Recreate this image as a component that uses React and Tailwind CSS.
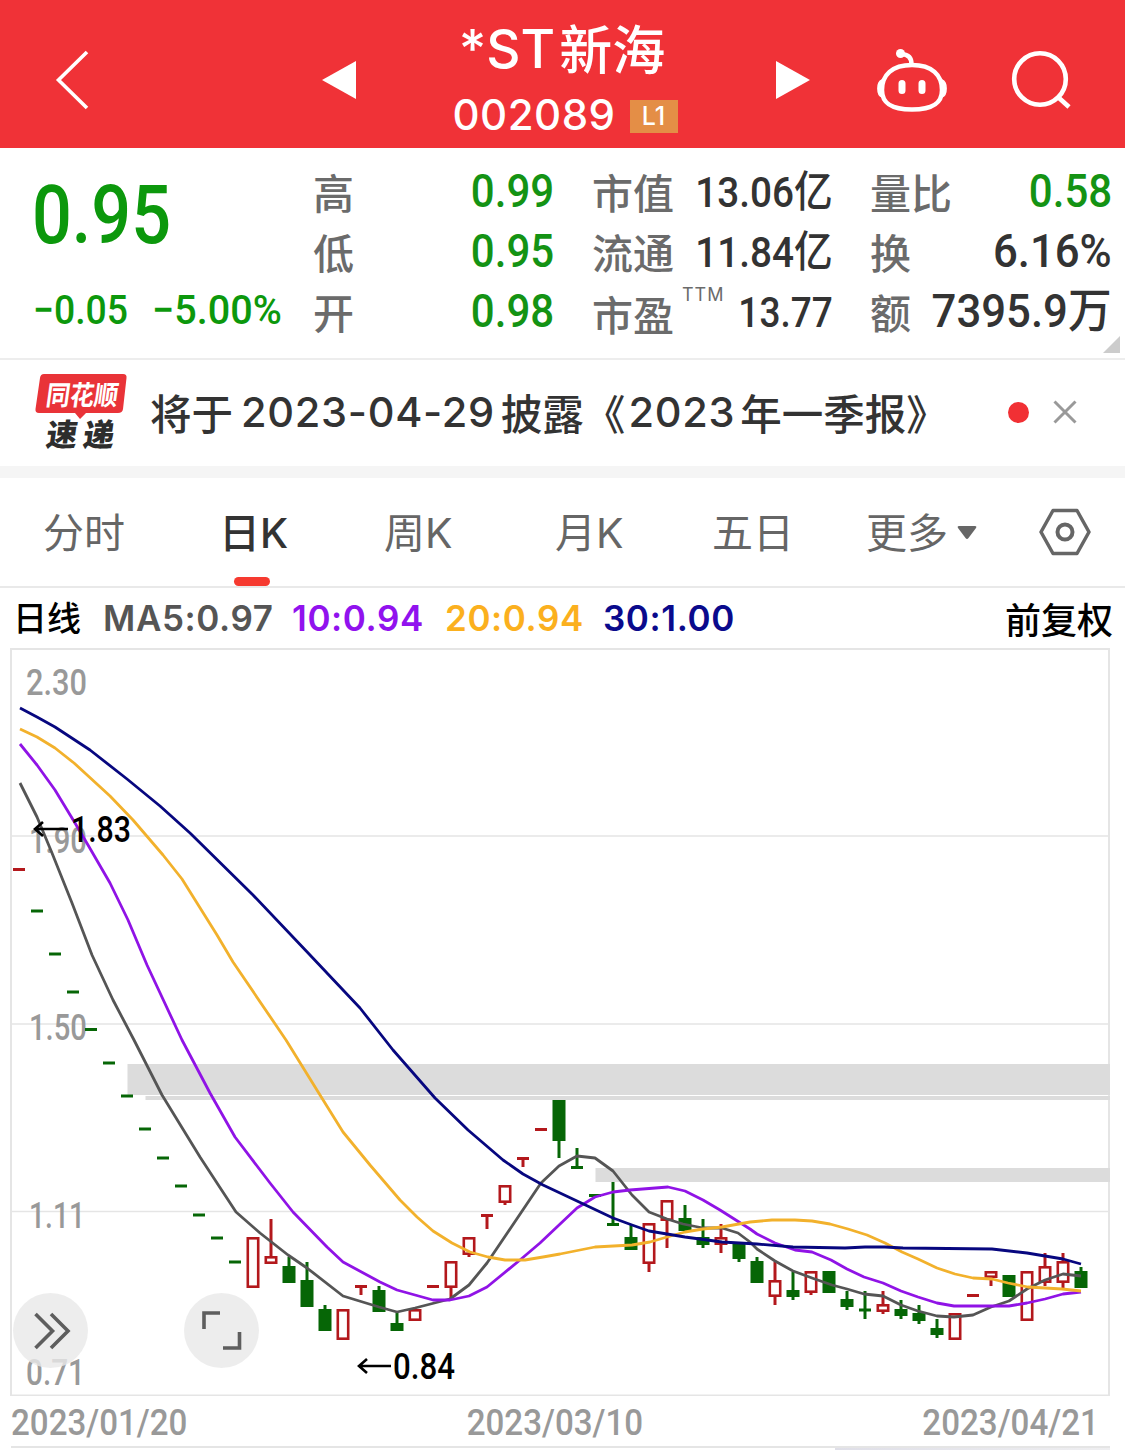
import React from 'react';

const MA_LEGEND = [
  { text: 'MA5:0.97', className: 'text-[#555555] w-[189px]' },
  { text: '10:0.94', className: 'text-[#9112ee] w-[153px]' },
  { text: '20:0.94', className: 'text-[#fbb01e] w-[158px]' },
  { text: '30:1.00', className: 'text-[#0a0a8c]' },
];

const TABS = ['分时', '日K', '周K', '月K', '五日'];

const RED = '#b3181c';
const GREEN = '#066606';
const STEP = 18;
const FIRST_X = 19;

// [type, high, top, bottom, low]; r = hollow red, g = solid green,
// dr / dg = flat day, in chart pixels
const CANDLES = [
  ['dr', 869.5, 869.5, 869.5, 869.5],
  ['dg', 911, 911, 911, 911],
  ['dg', 954, 954, 954, 954],
  ['dg', 992, 992, 992, 992],
  ['dg', 1029.5, 1029.5, 1029.5, 1029.5],
  ['dg', 1063, 1063, 1063, 1063],
  ['dg', 1096, 1096, 1096, 1096],
  ['dg', 1129, 1129, 1129, 1129],
  ['dg', 1158, 1158, 1158, 1158],
  ['dg', 1186, 1186, 1186, 1186],
  ['dg', 1215, 1215, 1215, 1215],
  ['dg', 1238, 1238, 1238, 1238],
  ['dg', 1262, 1262, 1262, 1262],
  ['r', 1237, 1237, 1288, 1288],
  ['r', 1219, 1256, 1264, 1264],
  ['g', 1257, 1266, 1283, 1283],
  ['g', 1262, 1280, 1307, 1307],
  ['g', 1305, 1309, 1331, 1331],
  ['r', 1309, 1309, 1340, 1340],
  ['dr', 1286.5, 1286.5, 1286.5, 1295],
  ['g', 1286, 1290, 1312, 1312],
  ['g', 1313, 1323, 1331, 1331],
  ['r', 1309, 1309, 1321, 1321],
  ['dr', 1286.5, 1286.5, 1286.5, 1286.5],
  ['r', 1261, 1261, 1288, 1298],
  ['r', 1237, 1237, 1255, 1257],
  ['dr', 1215.5, 1215.5, 1215.5, 1229],
  ['r', 1185, 1185, 1203, 1205],
  ['dr', 1158.5, 1158.5, 1158.5, 1167],
  ['dr', 1129.5, 1129.5, 1129.5, 1129.5],
  ['g', 1100, 1100, 1141, 1158],
  ['dg', 1148, 1167.5, 1167.5, 1168],
  ['dg', 1195.5, 1195.5, 1195.5, 1195.5],
  ['dg', 1182, 1224.5, 1224.5, 1225],
  ['g', 1225, 1237, 1250, 1250],
  ['r', 1223, 1223, 1264, 1272],
  ['r', 1200, 1200, 1221, 1248],
  ['g', 1205, 1218, 1231, 1231],
  ['g', 1219, 1237, 1245, 1248],
  ['r', 1224, 1237, 1245, 1253],
  ['g', 1243, 1243, 1259, 1262],
  ['g', 1257, 1261, 1283, 1283],
  ['r', 1262, 1280, 1297, 1305],
  ['g', 1272, 1290, 1297, 1300],
  ['r', 1271, 1271, 1293, 1295],
  ['g', 1271, 1271, 1293, 1293],
  ['g', 1291, 1299, 1307, 1310],
  ['dg', 1291, 1310, 1310, 1319],
  ['r', 1291, 1304, 1312, 1314],
  ['g', 1300, 1309, 1316, 1319],
  ['g', 1305, 1313, 1321, 1324],
  ['g', 1319, 1328, 1335, 1338],
  ['r', 1313, 1313, 1340, 1340],
  ['dr', 1295.5, 1295.5, 1295.5, 1295.5],
  ['r', 1271, 1271, 1278, 1286],
  ['g', 1275, 1275, 1297, 1297],
  ['r', 1271, 1271, 1321, 1321],
  ['r', 1253, 1266, 1283, 1286],
  ['r', 1253, 1261, 1283, 1290],
  ['g', 1267, 1271, 1288, 1288],
];

const MA_LINES = [
  {
    color: '#555555',
    points: '20,783 37,817 52,853 72,903 92,955 113,1000 134,1040 162,1095 200,1157 217,1183 236,1212 260,1233 288,1255 307,1268 343,1296 379,1307 397,1312 415,1308 450,1299 469,1285 487,1263 541,1183 559,1166 577,1156 595,1158 613,1171 632,1195 649,1212 667,1219 683,1224 703,1228 722,1228 738,1233 750,1242 757,1249 775,1261 793,1271 812,1278 832,1285 847,1289 864,1294 883,1296 901,1305 918,1311 937,1316 954,1317 973,1315 991,1307 1009,1301 1027,1289 1045,1280 1063,1274 1081,1276',
  },
  {
    color: '#9013e6',
    points: '20,744 37,765 55,790 75,823 88,845 110,883 128,920 147,965 182,1040 210,1093 235,1137 270,1183 293,1212 327,1247 343,1262 380,1282 397,1290 433,1300 450,1300 469,1296 487,1287 520,1260 540,1243 577,1208 595,1197 613,1192 630,1190 668,1187 685,1191 703,1200 720,1210 750,1229 757,1234 775,1243 795,1250 812,1252 831,1260 847,1269 864,1277 883,1283 901,1291 918,1297 937,1303 954,1306 1009,1306 1027,1303 1045,1299 1063,1294 1081,1292',
  },
  {
    color: '#f2b12c',
    points: '20,729 37,737 55,748 74,763 110,796 133,820 163,855 182,879 217,935 233,962 286,1040 320,1095 343,1132 370,1165 400,1200 417,1217 433,1231 452,1243 470,1252 488,1257 505,1260 525,1260 543,1257 560,1254 595,1247 632,1245 650,1242 667,1237 685,1232 703,1229 722,1227 750,1222 772,1220 795,1220 812,1221 830,1224 848,1229 867,1235 885,1243 902,1252 918,1259 937,1268 955,1274 973,1278 992,1279 1008,1283 1028,1287 1045,1288 1062,1289 1081,1291',
  },
  {
    color: '#07077f',
    points: '20,708 37,717 55,727 90,750 127,779 160,806 190,833 253,895 310,955 360,1008 393,1050 435,1098 468,1130 503,1160 523,1174 543,1185 577,1201 613,1218 632,1225 649,1231 685,1237 722,1242 757,1244 793,1247 845,1248 865,1247 885,1247 903,1248 992,1249 1027,1253 1045,1256 1063,1259 1081,1264',
  },
];

// Condensed DIN-like figures
const Num = ({ className, children }) => (
  <span className={`inline-block whitespace-nowrap font-['Roboto','Noto_Sans_CJK_SC',sans-serif] font-medium ${className}`}>
    {children}
  </span>
);

const Stat = ({ label, children }) => (
  <div className="flex h-[60px] items-center justify-between leading-[60px]">
    <span className="-mt-[2px] whitespace-nowrap text-[41px] font-medium text-[#6b6b6b]">{label}</span>
    {children}
  </div>
);

const Header = () => (
  <header className="flex h-[148px] items-center bg-[#f03237] pl-[52px] text-white">
    <svg className="mt-3 h-[64px] w-[40px] shrink-0" viewBox="0 0 40 64" fill="none" stroke="currentColor" strokeWidth="3.6">
      <path d="M35 4 L6.500 32 L35 60" />
    </svg>
    <svg className="ml-[230px] mt-3 h-[38px] w-[34px] shrink-0" viewBox="0 0 34 38" fill="currentColor">
      <path d="M34 0 V38 L0 19 Z" />
    </svg>
    <div className="flex w-[420px] flex-col items-center self-start pt-[15px]">
      <div className="flex h-[68px] items-center gap-[4px] pr-[8px] text-[53px] font-medium leading-[68px]">
        <span className="font-['Inter',sans-serif] text-[53px]">*ST</span>
        <span className="-mt-[4px]">新海</span>
      </div>
      <div className="mt-[2px] flex h-[60px] items-center gap-[14px] pr-[2px]">
        <span className="font-['Inter',sans-serif] text-[42px] font-medium leading-[52px] tracking-[0.5px]">002089</span>
        <span className="mt-[2px] h-[33px] w-[48px] bg-[#e48e46] text-center font-['Inter',sans-serif] text-[25px] font-medium leading-[33px]">L1</span>
      </div>
    </div>
    <svg className="mt-3 h-[38px] w-[34px] shrink-0" viewBox="0 0 34 38" fill="currentColor">
      <path d="M0 0 V38 L34 19 Z" />
    </svg>
    <svg className="ml-[66px] mt-3 h-[66px] w-[72px] shrink-0" viewBox="876 47 72 66" fill="none" stroke="currentColor" strokeWidth="4.500" strokeLinecap="round">
      <path d="M912 65 C892 65 882 75 882 90 C882 104 892 109.500 912 109.500 C932 109.500 942 104 942 90 C942 75 932 65 912 65 Z" />
      <path d="M911.500 64 C911.500 57.500 908 54.500 902 54" />
      <circle cx="900.500" cy="53.500" r="4.500" fill="currentColor" stroke="none" />
      <path d="M882 80 C876.500 82 876.500 95 882 97 Z M942 80 C947.500 82 947.500 95 942 97 Z" fill="currentColor" strokeWidth="1.500" />
      <path d="M902 83.500 V90.500 M922 83.500 V90.500" strokeWidth="7" />
    </svg>
    <svg className="ml-[62px] mt-3 h-[62px] w-[64px] shrink-0" viewBox="1010 49 64 62" fill="none" stroke="currentColor" strokeWidth="4.600">
      <circle cx="1040" cy="79" r="25.800" />
      <path d="M1058.500 97.500 L1069 107" />
    </svg>
  </header>
);

const Quote = () => (
  <section className="relative h-[212px] border-b-2 border-[#ededed] pt-[14px] font-['Noto_Sans_CJK_SC',sans-serif]">
    <div className="grid grid-cols-[280px_241px_38px_241px_37px_242px] pl-[33px]">
      <div className="flex flex-col text-[#0c980c]">
        <Num className="-ml-px h-[116px] origin-left scale-x-[0.855] text-[82px] leading-[106px]">0.95</Num>
        <div className="flex h-[64px] items-center whitespace-nowrap">
          <Num className="w-[119px] origin-left scale-x-[0.91] text-[41px] leading-[64px]">−0.05</Num>
          <Num className="origin-left scale-x-[0.965] text-[41px] leading-[64px]">−5.00%</Num>
        </div>
      </div>
      <div>
        <Stat label="高"><Num className="-mt-[2px] origin-right scale-x-[0.895] text-[47px] text-[#149314]">0.99</Num></Stat>
        <Stat label="低"><Num className="-mt-[2px] origin-right scale-x-[0.895] text-[47px] text-[#149314]">0.95</Num></Stat>
        <Stat label="开"><Num className="-mt-[2px] origin-right scale-x-[0.895] text-[47px] text-[#149314]">0.98</Num></Stat>
      </div>
      <div />
      <div>
        <Stat label="市值"><Num className="origin-right scale-x-[0.9] text-[43px] text-[#333333]">13.06亿</Num></Stat>
        <Stat label="流通"><Num className="origin-right scale-x-[0.9] text-[43px] text-[#333333]">11.84亿</Num></Stat>
        <div className="flex h-[60px] items-center justify-between leading-[60px]">
          <span className="mt-px whitespace-nowrap text-[41px] font-medium text-[#6b6b6b]">市盈</span>
          <span className="-mr-4 mb-[35px] ml-2 font-['Inter',sans-serif] text-[18px] leading-none tracking-[1px] text-[#6b6b6b]">TTM</span>
          <Num className="ml-auto origin-right scale-x-[0.86] text-[43px] text-[#333333]">13.77</Num>
        </div>
      </div>
      <div />
      <div>
        <Stat label="量比"><Num className="-mt-[2px] origin-right scale-x-[0.895] text-[47px] text-[#149314]">0.58</Num></Stat>
        <Stat label="换"><Num className="-mt-[2px] origin-right scale-x-[0.93] text-[47px] text-[#333333]">6.16%</Num></Stat>
        <Stat label="额"><Num className="-mt-[2px] origin-right scale-x-[0.93] text-[47px] text-[#333333]">7395.9万</Num></Stat>
      </div>
    </div>
    <svg className="absolute bottom-[5px] right-[5px] h-[17px] w-[17px]" viewBox="0 0 17 17">
      <path d="M17 0 V17 H0 Z" fill="#cccccc" />
    </svg>
  </section>
);

const NewsBar = () => (
  <section className="flex h-[118px] items-center border-b-[12px] border-[#f5f5f5] pl-[34px] font-['Noto_Sans_CJK_SC',sans-serif]">
    <svg className="h-[82px] w-[94px] shrink-0" viewBox="34 372 94 82">
      <path d="M44 374 H123 Q127 374 126.500 378 L123 409 Q122.500 413 118 413 H86 L80 419 L75 413 H39 Q35 413 35.500 409 L40 378 Q40.500 374 44 374 Z" fill="#e93338" />
      <text x="0" y="0" transform="translate(45 404.500) skewX(-8)" textLength="72" lengthAdjust="spacingAndGlyphs" className="text-[27px] font-bold" fill="#ffffff">同花顺</text>
      <text x="0" y="0" transform="translate(45 446) skewX(-8)" textLength="68" lengthAdjust="spacing" className="text-[31px] font-black" fill="#2d2d2d">速递</text>
    </svg>
    <div className="-mt-[3px] ml-[22px] flex w-[858px] items-center whitespace-nowrap text-[41.500px] font-medium leading-[60px] text-[#333333]">
      <span>将于</span>
      <span className="ml-2 mr-[6px] mt-px font-['Inter',sans-serif] tracking-[0.7px]">2023-04-29</span>
      <span>披露《</span>
      <span className="ml-[3px] mr-[5px] mt-px font-['Inter',sans-serif] tracking-[0.7px]">2023</span>
      <span>年一季报》</span>
    </div>
    <span className="-mt-[2px] h-[21px] w-[21px] rounded-full bg-[#f13034]" />
    <svg className="-mt-[2px] ml-[24px] h-[24px] w-[24px]" viewBox="0 0 24 24" stroke="#999999" strokeWidth="3">
      <path d="M1.500 1.500 L22.500 22.500 M22.500 1.500 L1.500 22.500" />
    </svg>
  </section>
);

const PeriodTabs = () => (
  <nav className="grid h-[110px] grid-cols-[176px_165px_171px_157px_154px_173px_1fr] items-center border-b-2 border-[#e9e9e9] pl-[43px] font-['Inter','Noto_Sans_CJK_SC',sans-serif] text-[41px] leading-[108px] text-[#666666]">
    {TABS.map((tab) => (
      <div key={tab} className="relative whitespace-nowrap">
        {tab === '日K' ? (
          <>
            <span className="relative top-px font-medium text-[#333333]">{tab}</span>
            <span className="absolute bottom-0 left-[15px] h-[9px] w-[36px] rounded-full bg-[#f63a30]" />
          </>
        ) : (
          <span className="relative top-px">{tab}</span>
        )}
      </div>
    ))}
    <div className="flex items-center whitespace-nowrap">
      <span className="relative top-px">更多</span>
      <svg className="ml-[9px] h-[15px] w-[20px]" viewBox="0 0 20 15">
        <path d="M2 1 H18 Q20 1 19 3 L11.500 13 Q10 15 8.500 13 L1 3 Q0 1 2 1 Z" fill="#666666" />
      </svg>
    </div>
    <svg className="h-[48px] w-[52px]" viewBox="0 0 52 48" fill="none" stroke="#666666" strokeWidth="3.500" strokeLinejoin="round">
      <path d="M14 2.500 H38 L50 24 L38 45.500 H14 L2 24 Z" />
      <circle cx="26" cy="24" r="7.500" strokeWidth="4" />
    </svg>
  </nav>
);

const Candle = ({ index, data }) => {
  const [type, high, top, bottom, low] = data;
  const x = FIRST_X + index * STEP;
  const color = type === 'r' || type === 'dr' ? RED : GREEN;

  if (type === 'dr' || type === 'dg') {
    return (
      <g stroke={color} strokeWidth="3">
        <path d={`M${x - 6} ${top} H${x + 6}`} />
        {low - high > 1 && <path d={`M${x} ${high} V${low}`} />}
      </g>
    );
  }

  return (
    <g stroke={color} strokeWidth="3">
      {high < top && <path d={`M${x} ${high} V${top}`} />}
      {low > bottom && <path d={`M${x} ${bottom} V${low}`} />}
      {type === 'g' ? (
        <rect x={x - 6.5} y={top} width="13" height={bottom - top} fill={color} stroke="none" />
      ) : (
        <rect x={x - 5.2} y={top + 1.3} width="10.4" height={bottom - top - 2.6} fill="none" strokeWidth="2.6" />
      )}
    </g>
  );
};

const AXIS_LABELS = [
  { text: '2.30', x: 26, y: 695, width: 61 },
  { text: '1.90', x: 29, y: 853, width: 58 },
  { text: '1.50', x: 29, y: 1040, width: 58 },
  { text: '1.11', x: 29, y: 1228, width: 56 },
  { text: '0.71', x: 26, y: 1385, width: 59 },
];

const Chart = () => (
  <svg className="block h-[748px] w-[1125px] font-['Roboto',sans-serif] font-medium" viewBox="0 648 1125 748">
    <path d="M11 649 H1109 V1395.500 H11 Z" fill="none" stroke="#e5e5e5" strokeWidth="2" />
    <path d="M11 836 H1109 M11 1024 H1109 M11 1211.500 H1109" stroke="#e5e5e5" strokeWidth="1.500" />
    <g className="text-[36px]" fill="#999999">
      {AXIS_LABELS.map((l) => (
        <text key={l.text} x={l.x} y={l.y} textLength={l.width} lengthAdjust="spacingAndGlyphs">{l.text}</text>
      ))}
    </g>
    <g fill="#dcdcdc">
      <rect x="127.500" y="1064" width="982.500" height="31" />
      <rect x="145.500" y="1096" width="964.500" height="4" />
      <rect x="595.500" y="1168" width="514.500" height="14" />
    </g>
    {CANDLES.map((c, i) => <Candle key={i} index={i} data={c} />)}
    {MA_LINES.map((line) => (
      <polyline key={line.color} points={line.points} fill="none" stroke={line.color} strokeWidth="2.8" strokeLinejoin="round" />
    ))}
    <g fill="none" stroke="#000000" strokeWidth="2.600">
      <path d="M68 829 H35 M43 822 L35 829 L43 836" />
      <path d="M391 1366 H359 M367 1359 L359 1366 L367 1373" />
    </g>
    <g className="text-[36px]">
      <text x="71" y="842" textLength="60" lengthAdjust="spacingAndGlyphs">1.83</text>
      <text x="393" y="1379" textLength="62" lengthAdjust="spacingAndGlyphs">0.84</text>
    </g>
    <g fill="#e9e9e9" fillOpacity="0.8">
      <circle cx="50.500" cy="1330.500" r="37.500" />
      <circle cx="221.500" cy="1330.500" r="37.500" />
    </g>
    <g fill="none" stroke="#5e5e5e" strokeWidth="3.600">
      <path d="M35.500 1314 L52.500 1331 L35.500 1348 M51 1314 L68 1331 L51 1348" />
      <path d="M204 1329 V1313 H220 M239.500 1332 V1348 H223" />
    </g>
  </svg>
);

export default function App() {
  return (
    <div className="h-[1450px] w-[1125px] overflow-hidden bg-white font-['Noto_Sans_CJK_SC',sans-serif]">
      <Header />
      <Quote />
      <NewsBar />
      <PeriodTabs />
      <div className="flex h-[60px] items-center whitespace-nowrap pl-[13px] pr-[12px] leading-[60px] text-black">
        <span className="-mt-[2px] w-[90px] text-[34px] font-medium">日线</span>
        {MA_LEGEND.map((m) => (
          <span key={m.text} className={`-mt-px font-['Inter',sans-serif] text-[35px] font-semibold tracking-[0.6px] ${m.className}`}>{m.text}</span>
        ))}
        <span className="ml-auto text-[36px] font-medium">前复权</span>
      </div>
      <Chart />
      <div className="flex h-[50px] items-center justify-between pl-[11px] pr-[26px] pt-[5px] text-[#999999]">
        <Num className="origin-left scale-x-[0.92] text-[36px] leading-[45px]">2023/01/20</Num>
        <Num className="scale-x-[0.92] text-[36px] leading-[45px]">2023/03/10</Num>
        <Num className="origin-right scale-x-[0.92] text-[36px] leading-[45px]">2023/04/21</Num>
      </div>
      <div className="ml-[11px] flex h-[4px] w-[1099px] justify-end border-t-2 border-[#e5e5e5]">
        <span className="h-[4px] w-[275px] bg-gradient-to-r from-[#dfdfe8] to-[#efeff1]" />
      </div>
    </div>
  );
}
